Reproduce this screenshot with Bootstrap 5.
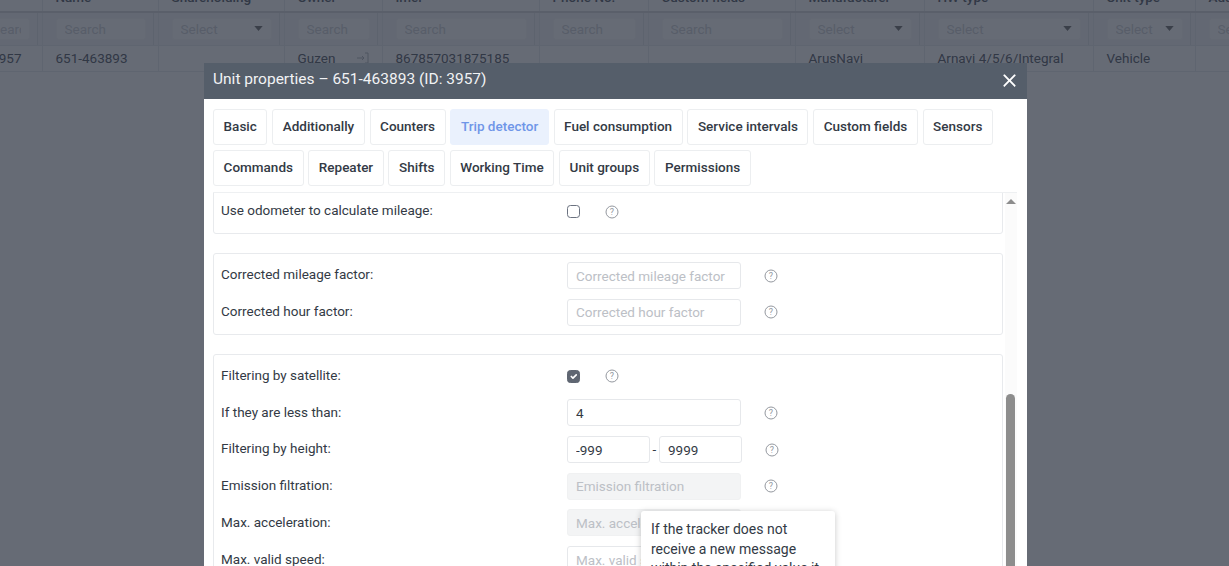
<!DOCTYPE html>
<html lang="en">
<head>
    <meta charset="UTF-8">
    <title>Unit properties</title>
    <link href="https://cdn.jsdelivr.net/npm/bootstrap@5.3.3/dist/css/bootstrap.min.css" rel="stylesheet">
    <style>
        html, body {
            height: 100%;
            overflow: hidden;
        }
        body {
            font-family: Roboto, "Liberation Sans", sans-serif;
            font-size: 13.5px;
            color: #333a45;
            background: #fff;
        }
        .units-wrap {
            margin-left: -30px;
            margin-top: -16px;
        }
        .units-table {
            table-layout: fixed;
            width: 1302px;
            margin: 0;
            font-size: 13.5px;
            --bs-table-color: #5a606b;
            --bs-table-bg: #fff;
            --bs-table-border-color: #e9ebee;
        }
        .units-table td, .units-table th {
            padding: 0 12px 0 13px;
            white-space: nowrap;
            overflow: hidden;
            vertical-align: middle;
            border-bottom: 1px solid #e9ebee;
            border-right: 1px solid #e9ebee;
        }
        .units-table th {
            height: 28px;
            font-weight: 500;
            border-bottom: 2px solid #d8dade;
        }
        .units-table .filter-row td {
            height: 33px;
            --bs-table-bg: #f6f6f7;
            box-shadow: inset -4px 0 0 #f6f6f7, inset -5px 0 0 #e4e6e9;
        }
        .units-table .data-row td {
            height: 26px;
        }
        .units-table .data-row td.row-id {
            padding-right: 20px;
        }
        .filter-field {
            height: 22px;
            font-size: 13.5px;
            padding: 0 8px;
            border-color: #f8f8f9;
            border-radius: 3px;
            background-color: #fff;
            min-width: 0;
        }
        .filter-field::placeholder {
            color: #d2d4d8;
        }
        .filter-pick {
            color: #d2d4d8;
            background-image: url("data:image/svg+xml,%3csvg xmlns='http://www.w3.org/2000/svg' viewBox='0 0 10 6'%3e%3cpath fill='%23777' d='M0 0h10L5 6z'/%3e%3c/svg%3e");
            background-size: 9px 5px;
            background-position: right 8px center;
            padding-right: 18px;
        }
        .login-mark {
            float: right;
            margin-top: 3px;
        }
        .dim-layer {
            background: rgba(30, 37, 52, .68);
            position: fixed;
            inset: 0;
            z-index: 10;
        }
        .unit-dialog {
            position: absolute;
            left: 204px;
            top: 63px;
            width: 823px;
            height: 503px;
            z-index: 20;
            background: #fff;
            color: #333a45;
            border: 0;
            border-radius: 0;
            overflow: hidden;
        }
        .unit-head {
            height: 36px;
            flex: none;
            padding: 0 7px 2px 9px;
            background: #555e6a;
            border: 0;
            border-radius: 0;
        }
        .unit-head h5 {
            font-size: 15.5px;
            font-weight: 400;
            color: #f1f2f4;
            margin: 0;
        }
        .unit-head .btn-close {
            font-size: 15px;
            margin: 0 3px 0 0;
            opacity: 1;
            background-size: 15px;
        }
        .unit-tabs {
            padding: 10px 9px 0;
            gap: 5px 4.7px;
            flex: none;
        }
        .unit-tab {
            height: 36px;
            padding: 0 9.6px;
            font-size: 13.5px;
            font-weight: 500;
            line-height: 33px;
            color: #333a45;
            background: #fff;
            border: 1px solid #eceef0;
            border-radius: 3px;
        }
        .unit-tab.active {
            color: #6f96e8;
            background: #eaf1fd;
            border-color: #eaf1fd;
        }
        .unit-scroll {
            position: relative;
            flex: 1 1 auto;
            min-height: 0;
            margin: 6px 10px 0 9px;
            border-top: 1px solid #eef0f2;
            overflow: hidden;
        }
        .unit-panel {
            width: 790px;
            padding: 8px 7px 8px;
            margin-bottom: 19px;
            border: 1px solid #e8eaed;
            border-radius: 3px;
        }
        .unit-panel.first-panel {
            margin-top: -4px;
        }
        .unit-row {
            height: 27px;
            margin-bottom: 9.7px;
        }
        .unit-row:last-child {
            margin-bottom: 0;
        }
        .unit-row label {
            width: 346px;
            flex: none;
            margin-top: -2px;
        }
        .unit-field {
            width: 174px;
            height: 27px;
            font-size: 13.5px;
            padding: 0 8px;
            color: #333a45;
            border-color: #e6e8eb;
            border-radius: 3px;
            flex: none;
        }
        .unit-field.half {
            width: 82.5px;
        }
        .unit-field::placeholder {
            color: #bcc0c6;
        }
        .unit-field:disabled {
            background: #f3f4f5;
            border-color: #f0f1f2;
        }
        .range-dash {
            width: 9.5px;
            text-align: center;
            flex: none;
        }
        .unit-check {
            width: 13px;
            height: 13px;
            margin: 0;
            border-color: #6b7280;
            border-radius: 3px;
            flex: none;
        }
        .unit-check:checked {
            background-color: #5f6672;
            border-color: #5f6672;
        }
        .help-mark {
            margin-left: 23px;
            flex: none;
        }
        .unit-check + .help-mark {
            margin-left: 25px;
        }
        .fake-track {
            position: absolute;
            top: 0;
            bottom: 0;
            left: 792px;
            width: 12px;
            background: #fbfbfb;
        }
        .fake-arrow {
            position: absolute;
            top: 6px;
            left: 1px;
            border-left: 5px solid transparent;
            border-right: 5px solid transparent;
            border-bottom: 5px solid #8d8d8d;
        }
        .fake-thumb {
            position: absolute;
            top: 201px;
            bottom: 0;
            left: 1px;
            width: 9px;
            background: #8d8d8d;
            border-radius: 5px 5px 0 0;
        }
        .hint-box {
            position: absolute;
            left: 437px;
            top: 448px;
            width: 194px;
            padding: 9px 10px;
            font-size: 14px;
            line-height: 19.5px;
            background: #fff;
            border-radius: 3px;
            box-shadow: 0 1px 6px rgba(0, 0, 0, .22);
            z-index: 30;
        }
    </style>
</head>
<body>

<div class="units-wrap">
    <table class="table units-table">
        <colgroup>
            <col style="width:72px"><col style="width:116px"><col style="width:126px"><col style="width:98px">
            <col style="width:157px"><col style="width:109px"><col style="width:147px"><col style="width:129px">
            <col style="width:169px"><col style="width:102px"><col style="width:77px">
        </colgroup>
        <thead>
            <tr>
                <th></th><th>Name</th><th>Shareholding</th><th>Owner</th><th>Imei</th><th>Phone No.</th>
                <th>Custom fields</th><th>Manufacturer</th><th>HW type</th><th>Unit type</th><th>Add</th>
            </tr>
        </thead>
        <tbody>
            <tr class="filter-row">
                <td><input class="form-control filter-field" placeholder="Search"></td>
                <td><input class="form-control filter-field" placeholder="Search"></td>
                <td><select class="form-select filter-field filter-pick"><option>Select</option></select></td>
                <td><input class="form-control filter-field" placeholder="Search"></td>
                <td><input class="form-control filter-field" placeholder="Search"></td>
                <td><input class="form-control filter-field" placeholder="Search"></td>
                <td><input class="form-control filter-field" placeholder="Search"></td>
                <td><select class="form-select filter-field filter-pick"><option>Select</option></select></td>
                <td><select class="form-select filter-field filter-pick"><option>Select</option></select></td>
                <td><select class="form-select filter-field filter-pick"><option>Select</option></select></td>
                <td><input class="form-control filter-field" placeholder="Search"></td>
            </tr>
            <tr class="data-row">
                <td class="text-end row-id">3957</td>
                <td>651-463893</td>
                <td></td>
                <td>Guzen
                    <svg class="login-mark" width="14" height="14" viewBox="0 0 14 14" fill="none" stroke="#b4b8be" stroke-width="1">
                        <path d="M1 7h7M6 5l2 2-2 2M9 2h3v10H9"/>
                    </svg>
                </td>
                <td>867857031875185</td>
                <td></td>
                <td></td>
                <td>ArusNavi</td>
                <td>Arnavi 4/5/6/Integral</td>
                <td>Vehicle</td>
                <td></td>
            </tr>
        </tbody>
    </table>
</div>

<div class="dim-layer"></div>

<div class="modal-content unit-dialog d-flex flex-column">
    <div class="modal-header unit-head d-flex justify-content-between align-items-center">
        <h5 class="modal-title">Unit properties – 651-463893 (ID: 3957)</h5>
        <button type="button" class="btn-close btn-close-white" aria-label="Close"></button>
    </div>

    <div class="d-flex flex-wrap unit-tabs">
        <div class="unit-tab">Basic</div>
        <div class="unit-tab">Additionally</div>
        <div class="unit-tab">Counters</div>
        <div class="unit-tab active">Trip detector</div>
        <div class="unit-tab">Fuel consumption</div>
        <div class="unit-tab">Service intervals</div>
        <div class="unit-tab">Custom fields</div>
        <div class="unit-tab">Sensors</div>
        <div class="unit-tab">Commands</div>
        <div class="unit-tab">Repeater</div>
        <div class="unit-tab">Shifts</div>
        <div class="unit-tab">Working Time</div>
        <div class="unit-tab">Unit groups</div>
        <div class="unit-tab">Permissions</div>
    </div>

    <div class="unit-scroll">
        <div class="unit-panel first-panel">
            <div class="d-flex align-items-center unit-row">
                <label>Use odometer to calculate mileage:</label>
                <input class="form-check-input unit-check" type="checkbox">
                <svg class="help-mark" width="14" height="14" viewBox="0 0 14 14"><circle cx="7" cy="7" r="6" fill="none" stroke="#94989f"/><text x="7" y="10" text-anchor="middle" font-size="9" fill="#94989f">?</text></svg>
            </div>
        </div>

        <div class="unit-panel">
            <div class="d-flex align-items-center unit-row">
                <label>Corrected mileage factor:</label>
                <input class="form-control unit-field" placeholder="Corrected mileage factor">
                <svg class="help-mark" width="14" height="14" viewBox="0 0 14 14"><circle cx="7" cy="7" r="6" fill="none" stroke="#94989f"/><text x="7" y="10" text-anchor="middle" font-size="9" fill="#94989f">?</text></svg>
            </div>
            <div class="d-flex align-items-center unit-row">
                <label>Corrected hour factor:</label>
                <input class="form-control unit-field" placeholder="Corrected hour factor">
                <svg class="help-mark" width="14" height="14" viewBox="0 0 14 14"><circle cx="7" cy="7" r="6" fill="none" stroke="#94989f"/><text x="7" y="10" text-anchor="middle" font-size="9" fill="#94989f">?</text></svg>
            </div>
        </div>

        <div class="unit-panel">
            <div class="d-flex align-items-center unit-row">
                <label>Filtering by satellite:</label>
                <input class="form-check-input unit-check" type="checkbox" checked>
                <svg class="help-mark" width="14" height="14" viewBox="0 0 14 14"><circle cx="7" cy="7" r="6" fill="none" stroke="#94989f"/><text x="7" y="10" text-anchor="middle" font-size="9" fill="#94989f">?</text></svg>
            </div>
            <div class="d-flex align-items-center unit-row">
                <label>If they are less than:</label>
                <input class="form-control unit-field" value="4">
                <svg class="help-mark" width="14" height="14" viewBox="0 0 14 14"><circle cx="7" cy="7" r="6" fill="none" stroke="#94989f"/><text x="7" y="10" text-anchor="middle" font-size="9" fill="#94989f">?</text></svg>
            </div>
            <div class="d-flex align-items-center unit-row">
                <label>Filtering by height:</label>
                <input class="form-control unit-field half" value="-999">
                <span class="range-dash">-</span>
                <input class="form-control unit-field half" value="9999">
                <svg class="help-mark" width="14" height="14" viewBox="0 0 14 14"><circle cx="7" cy="7" r="6" fill="none" stroke="#94989f"/><text x="7" y="10" text-anchor="middle" font-size="9" fill="#94989f">?</text></svg>
            </div>
            <div class="d-flex align-items-center unit-row">
                <label>Emission filtration:</label>
                <input class="form-control unit-field" placeholder="Emission filtration" disabled>
                <svg class="help-mark" width="14" height="14" viewBox="0 0 14 14"><circle cx="7" cy="7" r="6" fill="none" stroke="#94989f"/><text x="7" y="10" text-anchor="middle" font-size="9" fill="#94989f">?</text></svg>
            </div>
            <div class="d-flex align-items-center unit-row">
                <label>Max. acceleration:</label>
                <input class="form-control unit-field" placeholder="Max. acceleration" disabled>
            </div>
            <div class="d-flex align-items-center unit-row">
                <label>Max. valid speed:</label>
                <input class="form-control unit-field" placeholder="Max. valid speed">
            </div>
        </div>

        <div class="fake-track">
            <div class="fake-arrow"></div>
            <div class="fake-thumb"></div>
        </div>
    </div>

    <div class="hint-box">If the tracker does not receive a new message within the specified value it</div>
</div>

<script src="https://cdn.jsdelivr.net/npm/bootstrap@5.3.3/dist/js/bootstrap.bundle.min.js"></script>
</body>
</html>
